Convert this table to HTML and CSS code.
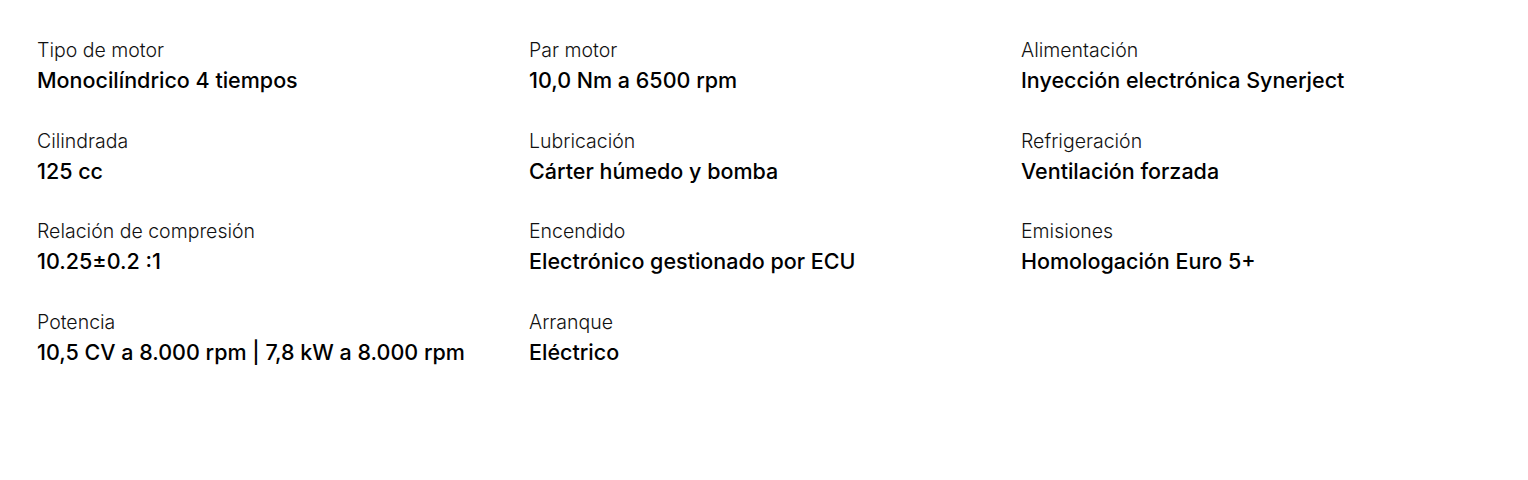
FILE: index.html
```html
<!DOCTYPE html>
<html lang="es">
<head>
<meta charset="utf-8">
<link rel="stylesheet" href="styles.css">
</head>
<body>
<div class="specs">
  <div class="spec"><div class="label">Tipo de motor</div><div class="value">Monocilíndrico 4 tiempos</div></div>
  <div class="spec"><div class="label">Par motor</div><div class="value">10,0 Nm a 6500 rpm</div></div>
  <div class="spec"><div class="label">Alimentación</div><div class="value">Inyección electrónica Synerject</div></div>
  <div class="spec"><div class="label">Cilindrada</div><div class="value">125 cc</div></div>
  <div class="spec"><div class="label">Lubricación</div><div class="value">Cárter húmedo y bomba</div></div>
  <div class="spec"><div class="label">Refrigeración</div><div class="value">Ventilación forzada</div></div>
  <div class="spec"><div class="label">Relación de compresión</div><div class="value">10.25±0.2 :1</div></div>
  <div class="spec"><div class="label">Encendido</div><div class="value">Electrónico gestionado por ECU</div></div>
  <div class="spec"><div class="label">Emisiones</div><div class="value">Homologación Euro 5+</div></div>
  <div class="spec"><div class="label">Potencia</div><div class="value">10,5 CV a 8.000 rpm | 7,8 kW a 8.000 rpm</div></div>
  <div class="spec"><div class="label">Arranque</div><div class="value">Eléctrico</div></div>
</div>
</body>
</html>
```
FILE: styles.css
```css
html, body {
  margin: 0;
  background: #fff;
}
body {
  font-family: Inter, "Noto Sans", sans-serif;
  color: #000;
}
.specs {
  display: grid;
  grid-template-columns: repeat(3, 492px);
  row-gap: 32.5px;
  padding: 37px 0 0 37px;
}
.spec {
  display: flex;
  flex-direction: column;
  gap: 2px;
}
.label {
  font-size: 19.5px;
  font-weight: 300;
  line-height: 26px;
  color: #111;
}
.value {
  font-size: 21.5px;
  font-weight: 500;
  line-height: 30px;
}
```
